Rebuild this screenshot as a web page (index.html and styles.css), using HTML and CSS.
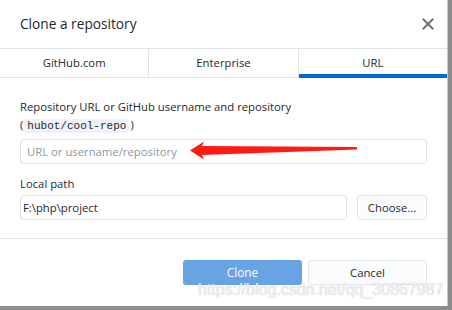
FILE: index.html
```html
<!DOCTYPE html>
<html lang="en">
<head>
<meta charset="utf-8">
<title>Clone a repository</title>
<link rel="stylesheet" href="styles.css">
</head>
<body>
<div class="dialog">
  <div class="header">
    <h1 class="title">Clone a repository</h1>
    <svg class="close" width="12" height="12" viewBox="0 0 12 12" aria-hidden="true">
      <path d="M1.5 1.5 L10.5 10.5 M10.5 1.5 L1.5 10.5" stroke="#6a737d" stroke-width="2" stroke-linecap="square" fill="none"/>
    </svg>
  </div>
  <div class="tabs">
    <div class="tab">GitHub.com</div>
    <div class="tab">Enterprise</div>
    <div class="tab active">URL</div>
  </div>
  <div class="content">
    <div class="label">Repository URL or GitHub username and repository<br>(<code class="code">hubot/cool-repo</code>)</div>
    <div class="input url-input"><span class="placeholder">URL or username/repository</span></div>
    <div class="label label-path">Local path</div>
    <div class="path-row">
      <div class="input path-input">F:\php\project</div>
      <div class="btn choose">Choose...</div>
    </div>
  </div>
  <div class="footer">
    <div class="btn primary">Clone</div>
    <div class="btn cancel">Cancel</div>
  </div>
  <svg class="arrow" width="452" height="310" viewBox="0 0 452 310" aria-hidden="true">
    <path d="M190 150.5 L204 141.5 L202 146 L357 147 L357 149.5 L202 155 L204 159.5 Z" fill="#ff1a14"/>
  </svg>
  <div class="watermark">https://blog.csdn.net/qq_30867987</div>
</div>
</body>
</html>
```

FILE: styles.css
```css
html, body {
  margin: 0;
  padding: 0;
}
body {
  background: #8d8d8d;
  width: 452px;
  height: 310px;
  overflow: hidden;
  font-family: "Open Sans", "Noto Sans", sans-serif;
  font-size: 11.3px;
  color: #24292e;
}
.dialog {
  position: relative;
  width: 447px;
  height: 306px;
  background: #fff;
  border-right: 1px solid #c9c9c9;
  display: flex;
  flex-direction: column;
}
.header {
  height: 48px;
  border-bottom: 1px solid #e1e4e8;
  display: flex;
  align-items: center;
  justify-content: space-between;
  padding: 0 13px 0 20px;
}
.title {
  margin: 0;
  font-size: 13.7px;
  font-weight: 400;
  color: #24292e;
  padding-bottom: 2px;
}
.close {
  display: block;
  margin-bottom: 1px;
}
.tabs {
  display: flex;
  height: 28px;
  border-bottom: 1px solid #e1e4e8;
}
.tab {
  flex: 1;
  display: flex;
  align-items: center;
  justify-content: center;
  border-right: 1px solid #e1e4e8;
  color: #24292e;
  padding-bottom: 2px;
}
.tab:last-child {
  border-right: none;
}
.tab.active {
  margin-bottom: -1px;
  box-shadow: inset 0 -4px 0 #0366d6;
}
.content {
  height: 161px;
  padding: 20px 20px 0 20px;
  box-sizing: border-box;
  border-bottom: 1px solid #e1e4e8;
}
.label {
  line-height: 18px;
  color: #24292e;
}
.code {
  font-family: "Liberation Mono", "DejaVu Sans Mono", monospace;
  font-size: 11px;
  background: #eef2f8;
  border-radius: 3px;
  padding: 1px 3px;
  margin: 0 1px;
}
.input {
  height: 25px;
  box-sizing: border-box;
  border: 1px solid #dfe2e5;
  border-radius: 3px;
  display: flex;
  align-items: center;
  padding: 0 0 1px 6px;
  background: #fff;
}
.url-input {
  margin-top: 4px;
}
.placeholder {
  color: #8f969e;
}
.label-path {
  margin-top: 11px;
  margin-bottom: 2px;
}
.path-row {
  display: flex;
  gap: 10px;
}
.path-input {
  flex: 1;
  padding-left: 2px;
}
.btn {
  height: 25px;
  box-sizing: border-box;
  border-radius: 3px;
  display: flex;
  align-items: center;
  justify-content: center;
  padding-bottom: 1px;
}
.choose {
  width: 70px;
  border: 1px solid #e1e4e8;
  background: #fafbfc;
  color: #24292e;
}
.footer {
  flex: 1;
  display: flex;
  justify-content: flex-end;
  align-items: flex-start;
  gap: 6px;
  padding: 21px 20px 0 0;
}
.primary {
  width: 119px;
  background: #68a3e4;
  color: #fff;
  font-size: 11.8px;
}
.cancel {
  width: 119px;
  border: 1px solid #e1e4e8;
  background: #fafbfc;
  color: #24292e;
}
.arrow {
  position: absolute;
  left: 0;
  top: 0;
  pointer-events: none;
}
.watermark {
  position: absolute;
  left: 198px;
  top: 281px;
  font-family: "Liberation Sans", Arial, sans-serif;
  font-size: 16px;
  line-height: 18px;
  color: #f1f1f1;
  text-shadow: 0 0 1px #b8b8b8;
  white-space: nowrap;
}
```
